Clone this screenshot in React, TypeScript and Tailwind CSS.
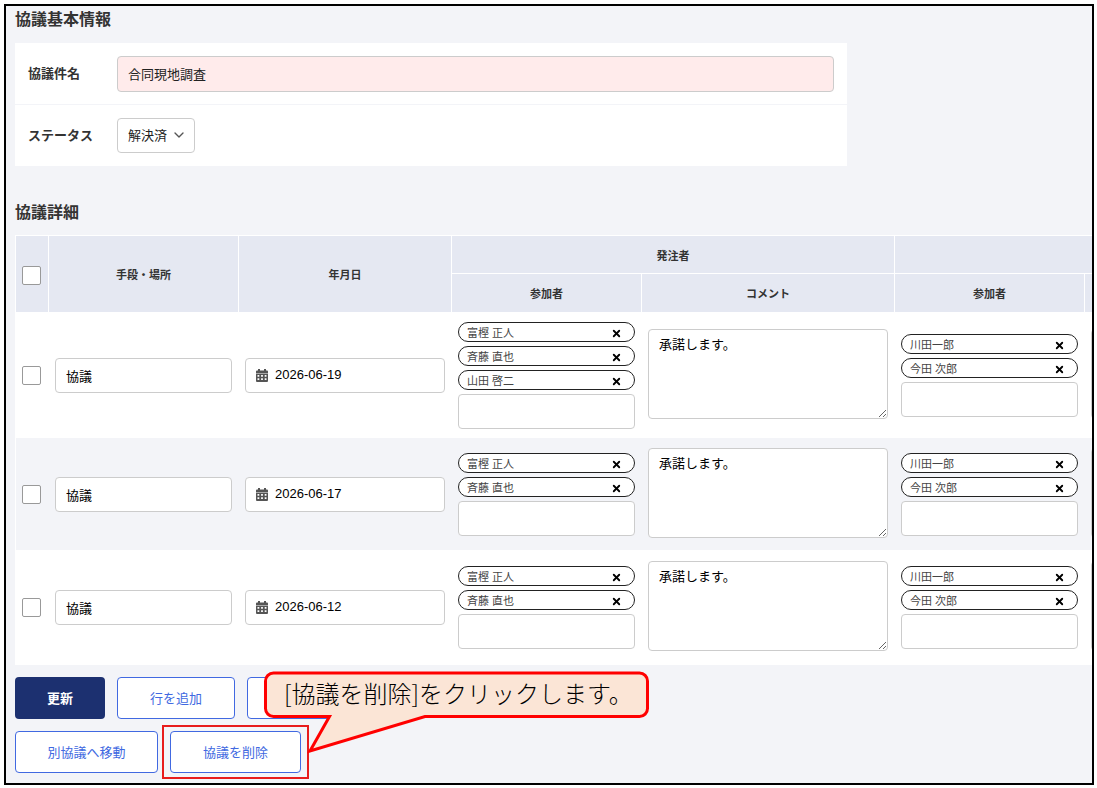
import { useState } from "react"
import { ChevronDown, X } from "lucide-react"

interface Meeting {
  id: number
  place: string
  date: string
  clients: string[]
  comment: string
  contractors: string[]
}

const initialMeetings: Meeting[] = [
  { id: 1, place: "協議", date: "2026-06-19", clients: ["富樫 正人", "斉藤 直也", "山田 啓二"], comment: "承諾します。", contractors: ["川田一郎", "今田 次郎"] },
  { id: 2, place: "協議", date: "2026-06-17", clients: ["富樫 正人", "斉藤 直也"], comment: "承諾します。", contractors: ["川田一郎", "今田 次郎"] },
  { id: 3, place: "協議", date: "2026-06-12", clients: ["富樫 正人", "斉藤 直也"], comment: "承諾します。", contractors: ["川田一郎", "今田 次郎"] },
]

const fieldClass = "block w-full rounded border border-[#ccc] bg-white px-[10px] text-[13px] text-black outline-none"
const headClass = "border-t border-l border-white bg-[#e5e8f2] p-0 pt-0.5 text-center align-middle text-[11px] font-bold leading-4"
const cellClass = "pr-[6px] pl-[7px] align-middle"
const outlineButton = "h-[42px] rounded border border-[#4169e1] bg-white pt-0.5 text-[13px] text-[#4169e1]"

function CalendarIcon() {
  return (
    <svg width="12" height="13" viewBox="0 0 12 13" aria-hidden="true">
      <path
        fill="#555"
        fillRule="evenodd"
        d="M2 0h2v1.500h4V0h2v1.500h1a1 1 0 0 1 1 1V4H0V2.500a1 1 0 0 1 1-1h1zM0 4.600h12V12a1 1 0 0 1-1 1H1a1 1 0 0 1-1-1zM1.500 6v1.700h1.800V6zM5.100 6v1.700h1.800V6zM8.700 6v1.700h1.800V6zM1.500 9.300v1.700h1.800V9.300zM5.100 9.300v1.700h1.800V9.300zM8.700 9.300v1.700h1.800V9.300z"
      />
    </svg>
  )
}

function Checkbox({ label }: { label: string }) {
  return (
    <input
      type="checkbox"
      aria-label={label}
      className="ml-[6px] block size-[19px] appearance-none rounded-xs border border-[#999] bg-white checked:bg-[#4169e1]"
    />
  )
}

function Participants({ names, label }: { names: string[]; label: string }) {
  const [items, setItems] = useState(names)

  return (
    <div className="flex flex-col">
      <ul className="flex flex-col">
        {items.map((name) => (
          <li key={name} className="mb-1 flex h-5 items-center justify-between rounded-full border border-[#222] bg-white pt-0.5 pr-3 pl-2 text-[11px] leading-4 text-[#444]">
            <span>{name}</span>
            <button type="button" aria-label={`${name}を外す`} onClick={() => setItems(items.filter((n) => n !== name))}>
              <X size={11} strokeWidth={4} className="text-black" />
            </button>
          </li>
        ))}
      </ul>
      <input type="text" aria-label={label} className={`${fieldClass} h-[35px]`} />
    </div>
  )
}

function Comment({ text, label }: { text: string; label: string }) {
  return (
    <textarea
      defaultValue={text}
      aria-label={label}
      className={`${fieldClass} h-[90px] resize-y py-[5px] leading-5`}
    />
  )
}

function BasicInfo() {
  return (
    <div className="max-w-[832px] bg-white">
      <div className="flex items-center border-b border-[#f3f4f8] pt-[13px] pr-[13px] pb-3">
        <label htmlFor="title" className="w-[102px] shrink-0 pl-[13px] text-[13px] font-bold">協議件名</label>
        <input id="title" type="text" defaultValue="合同現地調査" className="h-9 min-w-0 flex-1 rounded border border-[#ccc] bg-[#ffebeb] px-[10px] pb-0.5 text-[13px] text-[#222]" />
      </div>
      <div className="flex items-center py-[13px]">
        <label htmlFor="status" className="w-[102px] shrink-0 pl-[13px] text-[13px] font-bold">ステータス</label>
        <div className="relative">
          <select id="status" className="block h-[35px] w-[78px] appearance-none rounded border border-[#ccc] bg-white pl-[10px] text-[13px] text-[#222]">
            <option>解決済</option>
            <option>未解決</option>
          </select>
          <ChevronDown size={16} className="pointer-events-none absolute top-[9px] right-2 text-[#555]" />
        </div>
      </div>
    </div>
  )
}

function MeetingTable() {
  return (
    <table className="w-[1323px] table-fixed border-separate border-spacing-0 border-b border-white">
      <colgroup>
        <col className="w-[33px]" />
        <col className="w-[190px]" />
        <col className="w-[213px]" />
        <col className="w-[190px]" />
        <col className="w-[253px]" />
        <col className="w-[190px]" />
        <col className="w-[254px]" />
      </colgroup>
      <thead>
        <tr className="h-[38px]">
          <th rowSpan={2} className={headClass}><Checkbox label="すべて選択" /></th>
          <th rowSpan={2} className={headClass}>手段・場所</th>
          <th rowSpan={2} className={headClass}>年月日</th>
          <th colSpan={2} className={headClass}>発注者</th>
          <th colSpan={2} className={headClass} aria-label="受注者" />
        </tr>
        <tr className="h-[39px]">
          <th className={headClass}>参加者</th>
          <th className={headClass}>コメント</th>
          <th className={headClass}>参加者</th>
          <th className={headClass} aria-label="コメント" />
        </tr>
      </thead>
      <tbody>
        {initialMeetings.map((m) => (
          <tr key={m.id} className="bg-white last:h-[114px] even:bg-[#f3f4f8]">
            <td className="border-l border-white p-0 align-middle"><Checkbox label={`${m.date}を選択`} /></td>
            <td className={cellClass}>
              <input type="text" defaultValue={m.place} aria-label="手段・場所" className={`${fieldClass} h-[35px]`} />
            </td>
            <td className={cellClass}>
              <label className={`${fieldClass} flex h-[35px] items-center gap-[7px]`}>
                <CalendarIcon />
                <input type="text" defaultValue={m.date} aria-label="年月日" className="min-w-0 flex-1 outline-none" />
              </label>
            </td>
            <td className={`${cellClass} pt-[10px] pb-[9px]`}><Participants names={m.clients} label="発注者の参加者" /></td>
            <td className={`${cellClass} pt-[10px] pb-3`}><Comment text={m.comment} label="発注者のコメント" /></td>
            <td className={`${cellClass} pt-[10px] pb-[9px]`}><Participants names={m.contractors} label="受注者の参加者" /></td>
            <td className={`${cellClass} pt-[10px] pb-3`}><Comment text="" label="受注者のコメント" /></td>
          </tr>
        ))}
      </tbody>
    </table>
  )
}

// Speech balloon that points at the delete button
function Callout() {
  return (
    <div className="pointer-events-none absolute -top-[6px] left-[249px] w-[386px]">
      <svg width="386" height="84" viewBox="0 0 386 84" className="absolute top-0 left-0" aria-hidden="true">
        <path
          d="M9.500 2H375.500A8 8 0 0 1 383.500 10V37.500A8 8 0 0 1 375.500 45.500H161L46 80L65.500 45.500H9.500A8 8 0 0 1 1.500 37.500V10A8 8 0 0 1 9.500 2Z"
          fill="#fbe5d6"
          stroke="#f00"
          strokeWidth="3"
        />
      </svg>
      <p className="relative py-[6px] pl-5 font-['Noto_Sans_CJK_JP',sans-serif] text-[24px] leading-8 font-light whitespace-nowrap text-black">
        [協議を削除]をクリックします。
      </p>
    </div>
  )
}

export default function App() {
  return (
    <div className="min-h-screen bg-white pt-1 pr-[3px] pb-[3px] pl-1 font-['Liberation_Sans','Noto_Sans_CJK_JP',sans-serif] text-[#333]">
      <main className="overflow-hidden border-2 border-black bg-[#f3f4f8] pt-0.5 pb-[10px] pl-[9px]">
        <h2 className="mb-[11px] text-base leading-6 font-bold">協議基本情報</h2>
        <BasicInfo />

        <h2 className="mt-[35px] mb-[10px] text-base leading-6 font-bold">協議詳細</h2>
        <div className="overflow-hidden">
          <MeetingTable />
        </div>

        <div className="relative mt-3 flex flex-col gap-3">
          <div className="flex gap-3">
            <button type="button" className="h-[42px] w-[90px] rounded bg-[#1c3070] pt-0.5 text-[13px] font-bold text-white">更新</button>
            <button type="button" className={`${outlineButton} w-[118px]`}>行を追加</button>
            <button type="button" aria-label="行を削除" className={`${outlineButton} w-[118px]`} />
          </div>
          <div className="flex gap-3">
            <button type="button" className={`${outlineButton} w-[143px]`}>別協議へ移動</button>
            <div className="relative">
              <button type="button" className={`${outlineButton} w-[131px]`}>協議を削除</button>
              <div className="pointer-events-none absolute -inset-x-2 -inset-y-[6px] border-2 border-[#e81c1c]" />
            </div>
          </div>
          <Callout />
        </div>
      </main>
    </div>
  )
}
